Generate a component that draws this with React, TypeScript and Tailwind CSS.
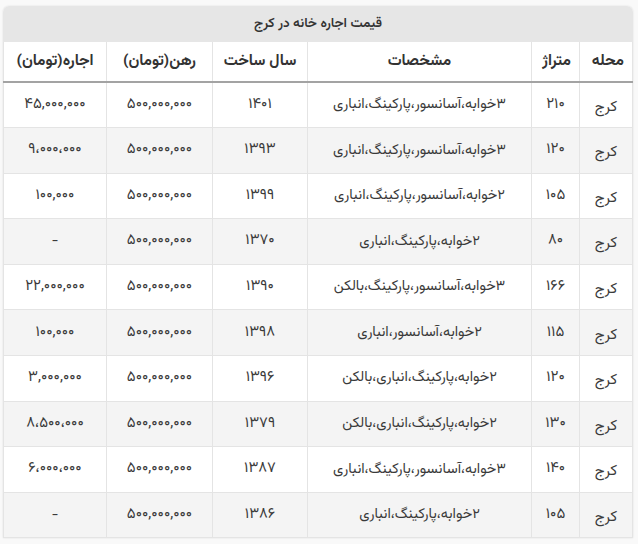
import React from "react";

type Row = {
  area: string;
  meter: string;
  specs: string;
  year: string;
  deposit: string;
  rent: string;
};

const rows: Row[] = [
  { area: "کرج", meter: "۲۱۰", specs: "۳خوابه،آسانسور،پارکینگ،انباری", year: "۱۴۰۱", deposit: "۵۰۰,۰۰۰,۰۰۰", rent: "۴۵,۰۰۰,۰۰۰" },
  { area: "کرج", meter: "۱۲۰", specs: "۳خوابه،آسانسور،پارکینگ،انباری", year: "۱۳۹۳", deposit: "۵۰۰,۰۰۰,۰۰۰", rent: "۹،۰۰۰،۰۰۰" },
  { area: "کرج", meter: "۱۰۵", specs: "۲خوابه،آسانسور،پارکینگ،انباری", year: "۱۳۹۹", deposit: "۵۰۰,۰۰۰,۰۰۰", rent: "۱۰۰,۰۰۰" },
  { area: "کرج", meter: "۸۰", specs: "۲خوابه،پارکینگ،انباری", year: "۱۳۷۰", deposit: "۵۰۰,۰۰۰,۰۰۰", rent: "-" },
  { area: "کرج", meter: "۱۶۶", specs: "۳خوابه،آسانسور،پارکینگ،بالکن", year: "۱۳۹۰", deposit: "۵۰۰,۰۰۰,۰۰۰", rent: "۲۲,۰۰۰,۰۰۰" },
  { area: "کرج", meter: "۱۱۵", specs: "۲خوابه،آسانسور،انباری", year: "۱۳۹۸", deposit: "۵۰۰,۰۰۰,۰۰۰", rent: "۱۰۰,۰۰۰" },
  { area: "کرج", meter: "۱۲۰", specs: "۲خوابه،پارکینگ،انباری،بالکن", year: "۱۳۹۶", deposit: "۵۰۰,۰۰۰,۰۰۰", rent: "۳,۰۰۰,۰۰۰" },
  { area: "کرج", meter: "۱۳۰", specs: "۲خوابه،پارکینگ،انباری،بالکن", year: "۱۳۷۹", deposit: "۵۰۰,۰۰۰,۰۰۰", rent: "۸،۵۰۰،۰۰۰" },
  { area: "کرج", meter: "۱۴۰", specs: "۳خوابه،آسانسور،پارکینگ،انباری", year: "۱۳۸۷", deposit: "۵۰۰,۰۰۰,۰۰۰", rent: "۶،۰۰۰،۰۰۰" },
  { area: "کرج", meter: "۱۰۵", specs: "۲خوابه،پارکینگ،انباری", year: "۱۳۸۶", deposit: "۵۰۰,۰۰۰,۰۰۰", rent: "-" },
];

const cell = "border border-[#e4e4e4] text-center align-middle px-2";

export default function App() {
  return (
    <div
      dir="rtl"
      className="min-h-[544px] w-[638px] bg-[#f9f9f9] pt-[6px] pl-[3px] pr-[5px] text-[#3a3a3a]"
      style={{ fontFamily: '"Vazirmatn", "Noto Sans Arabic", "DejaVu Sans", sans-serif' }}
    >
      <div className="overflow-hidden rounded-t-[6px] bg-white shadow-[0_0_2px_rgba(0,0,0,0.12)]">
        <div className="flex h-[36px] items-center justify-center bg-[#e6e6e6] text-[13.5px] font-semibold text-[#333]">
          قیمت اجاره خانه در کرج
        </div>
        <table className="w-full table-fixed border-collapse text-[14.5px]">
          <colgroup>
            <col className="w-[53px]" />
            <col className="w-[48px]" />
            <col className="w-[224px]" />
            <col className="w-[95px]" />
            <col className="w-[106px]" />
            <col />
          </colgroup>
          <thead>
            <tr className="h-[40px] border-b-2 border-[#a3a3a3] text-[15.5px] font-semibold text-[#333]">
              <th className="border-x border-[#e4e4e4] px-2 text-right">محله</th>
              <th className="border-x border-[#e4e4e4] px-2 text-right">متراژ</th>
              <th className="border-x border-[#e4e4e4] px-2 text-center">مشخصات</th>
              <th className="border-x border-[#e4e4e4] px-2 text-center">سال ساخت</th>
              <th className="border-x border-[#e4e4e4] px-2 text-center">رهن(تومان)</th>
              <th className="border-x border-[#e4e4e4] px-2 text-center">اجاره(تومان)</th>
            </tr>
          </thead>
          <tbody>
            {rows.map((r, i) => (
              <tr key={i} className={`h-[45.6px] ${i % 2 === 1 ? "bg-[#f4f4f4]" : "bg-white"}`}>
                <td className={`${cell} text-[15px] pt-[6px]`}>{r.area}</td>
                <td className={`${cell} text-[15px]`}>{r.meter}</td>
                <td className={cell}>{r.specs}</td>
                <td className={`${cell} text-[15px]`}>{r.year}</td>
                <td className={`${cell} text-[15px]`}>{r.deposit}</td>
                <td className={`${cell} text-[15px]`}>{r.rent}</td>
              </tr>
            ))}
          </tbody>
        </table>
      </div>
    </div>
  );
}
